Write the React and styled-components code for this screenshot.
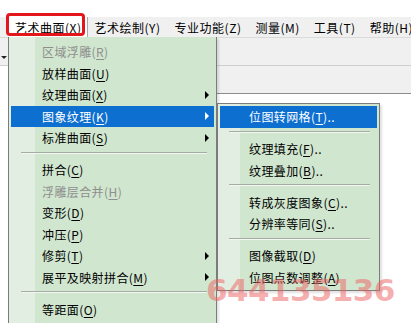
import styled, { createGlobalStyle } from "styled-components";

const GlobalStyle = createGlobalStyle`
  html, body {
    margin: 0;
    padding: 0;
    background: #fff;
  }
  body {
    font-family: "Noto Sans CJK SC", "Noto Sans", sans-serif;
    font-size: 12px;
    color: #000;
    overflow: hidden;
  }
`;

const Window = styled.div`
  position: relative;
  width: 411px;
  height: 323px;
  overflow: hidden;
  background: #fff;
`;

const TopStrip = styled.div`
  height: 17px;
  background: #fff;
`;

const MenuBar = styled.div`
  display: flex;
  align-items: stretch;
  height: 20px;
  padding-left: 8px;
  background: #f0f0f0;
  border-bottom: 1px solid #dadada;
  letter-spacing: 0.5px;
`;

const BarItem = styled.div`
  display: flex;
  align-items: center;
  padding: ${(p) => (p.$active ? "0 5px 0 7px" : "0 7px")};
  white-space: nowrap;
  background: ${(p) => (p.$active ? "#fff" : "transparent")};
  border-right: ${(p) => (p.$active ? "1px solid #a8a8a8" : "none")};
`;

const ToolRow = styled.div`
  display: flex;
  align-items: flex-end;
  height: 27px;
  padding-left: 1px;
  background: #f0f0f0;
  border-bottom: 1px solid #cfcfcf;
`;

const DropCaret = styled.span`
  margin-bottom: 6px;
  width: 0;
  height: 0;
  border-left: 3px solid transparent;
  border-right: 3px solid transparent;
  border-top: 3px solid #222;
`;

const ToolRow2 = styled.div`
  display: grid;
  grid-template-columns: 216px 1fr;
  height: 28px;
`;

const LeftPane = styled.div`
  background: #fff;
`;

const RightTools = styled.div`
  background: #f0f0f0;
  border-bottom: 1px solid #8c8c8c;
`;

const RedMark = styled.div`
  position: absolute;
  left: 6px;
  top: 13px;
  width: 73px;
  height: 17px;
  border: 3px solid #e3161c;
  border-radius: 4px;
  pointer-events: none;
`;

const Menu = styled.div`
  position: absolute;
  left: ${(p) => p.$left}px;
  top: ${(p) => p.$top}px;
  width: ${(p) => p.$width}px;
  padding: ${(p) => p.$padTop}px 0 2px;
  box-sizing: border-box;
  letter-spacing: 0.4px;
  background: linear-gradient(
    to right,
    #e2eee1 0,
    #e2eee1 ${(p) => p.$gutter}px,
    #d0e6cf ${(p) => p.$gutter}px
  );
  border: 1px solid #7c7c7c;
  border-top: ${(p) => (p.$attached ? "none" : "1px solid #7c7c7c")};
  box-shadow: 2px 2px 2px rgba(0, 0, 0, 0.12);
`;

const Item = styled.div`
  position: relative;
  display: flex;
  align-items: center;
  height: 21.5px;
  margin: 0 2px;
  padding-left: ${(p) => p.$indent}px;
  white-space: nowrap;
  color: ${(p) => (p.$active ? "#fff" : p.$disabled ? "#8e8e8e" : "#000")};
  background: ${(p) => (p.$active ? "#0d6fd0" : "transparent")};
`;

const Key = styled.span`
  text-decoration: underline;
  text-underline-offset: 2px;
`;

const Arrow = styled.span`
  position: absolute;
  right: 5px;
  top: 50%;
  margin-top: -4px;
  width: 0;
  height: 0;
  border-top: 4px solid transparent;
  border-bottom: 4px solid transparent;
  border-left: 4px solid ${(p) => (p.$active ? "#fff" : "#000")};
`;

const Separator = styled.div`
  height: 10.5px;
  box-sizing: border-box;
  padding-top: 3px;
  margin: 0 ${(p) => p.$right}px 0 ${(p) => p.$left}px;

  &::before {
    content: "";
    display: block;
    border-top: 1px solid #a3ada3;
    border-bottom: 1px solid #f2f7f2;
  }
`;

const Watermark = styled.div`
  position: absolute;
  left: 206px;
  top: 272px;
  font-family: "DejaVu Sans", sans-serif;
  font-weight: bold;
  font-size: 31px;
  letter-spacing: -0.6px;
  color: rgba(238, 96, 96, 0.5);
  pointer-events: none;
  z-index: 5;
`;

const mainItems = [
  { label: "区域浮雕", key: "R", disabled: true },
  { label: "放样曲面", key: "U" },
  { label: "纹理曲面", key: "X", sub: true },
  { label: "图象纹理", key: "K", sub: true, active: true },
  { label: "标准曲面", key: "S", sub: true },
  { sep: true },
  { label: "拼合", key: "C" },
  { label: "浮雕层合并", key: "H", disabled: true },
  { label: "变形", key: "D" },
  { label: "冲压", key: "P" },
  { label: "修剪", key: "T", sub: true },
  { label: "展平及映射拼合", key: "M", sub: true },
  { sep: true },
  { label: "等距面", key: "O" },
  { sep: true },
];

const subItems = [
  { label: "位图转网格", key: "T", tail: "..", active: true },
  { sep: true },
  { label: "纹理填充", key: "F", tail: ".." },
  { label: "纹理叠加", key: "B", tail: ".." },
  { sep: true },
  { label: "转成灰度图象", key: "C", tail: ".." },
  { label: "分辨率等同", key: "S", tail: ".." },
  { sep: true },
  { label: "图像截取", key: "D" },
  { label: "位图点数调整", key: "A" },
];

const barItems = [
  { label: "艺术曲面", key: "X", active: true },
  { label: "艺术绘制", key: "Y" },
  { label: "专业功能", key: "Z" },
  { label: "测量", key: "M" },
  { label: "工具", key: "T" },
  { label: "帮助", key: "H" },
];

function MenuList({ items, indent, sepLeft, sepRight }) {
  return items.map((it, i) =>
    it.sep ? (
      <Separator key={i} $left={sepLeft} $right={sepRight} />
    ) : (
      <Item key={i} $indent={indent} $active={it.active} $disabled={it.disabled}>
        {it.label}(<Key>{it.key}</Key>){it.tail}
        {it.sub && <Arrow $active={it.active} />}
      </Item>
    )
  );
}

export default function App() {
  return (
    <>
      <GlobalStyle />
      <Window>
        <TopStrip />
        <MenuBar>
          {barItems.map((b) => (
            <BarItem key={b.key} $active={b.active}>
              {b.label}({b.key})
            </BarItem>
          ))}
        </MenuBar>
        <ToolRow>
          <DropCaret />
        </ToolRow>
        <ToolRow2>
          <LeftPane />
          <RightTools />
        </ToolRow2>

        <RedMark />

        <Menu $left={8} $top={37} $width={209} $padTop={4} $gutter={26} $attached>
          <MenuList items={mainItems} indent={31} sepLeft={12} sepRight={9} />
        </Menu>

        <Menu $left={217} $top={103} $width={163} $padTop={2} $gutter={22}>
          <MenuList items={subItems} indent={29} sepLeft={11} sepRight={9} />
        </Menu>

        <Watermark>644135136</Watermark>
      </Window>
    </>
  );
}
